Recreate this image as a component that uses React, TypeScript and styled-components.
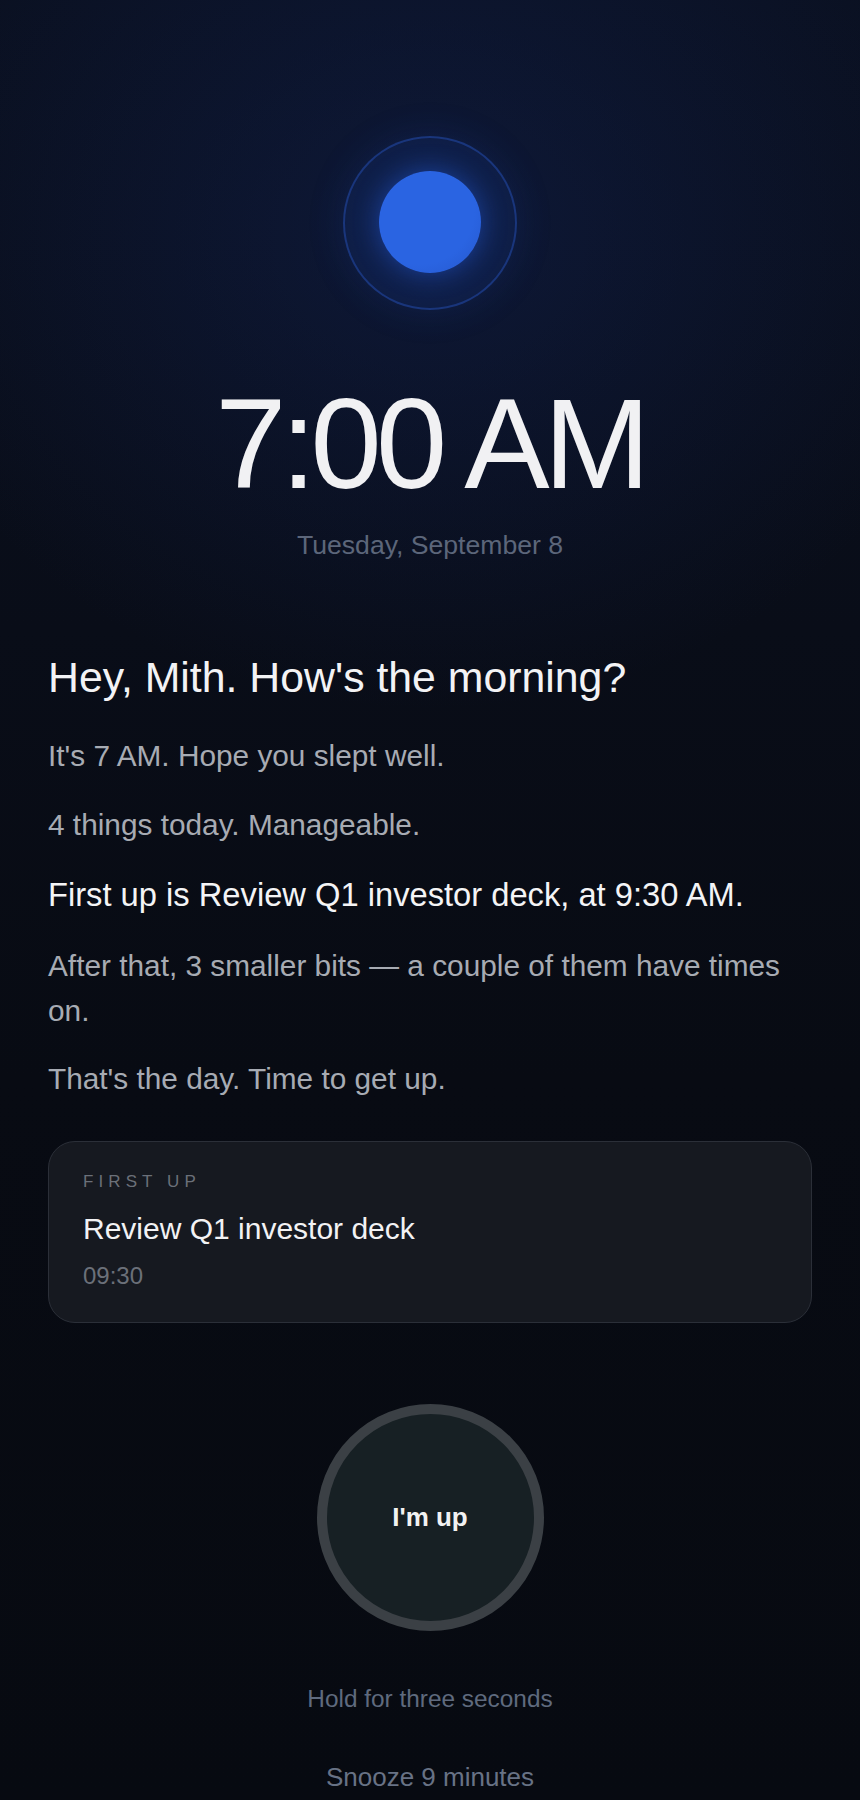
import styled, { createGlobalStyle } from 'styled-components';

const GlobalStyle = createGlobalStyle`
  html, body {
    margin: 0;
    padding: 0;
    background: #080b13;
  }
  body {
    font-family: 'Liberation Sans', Arial, sans-serif;
    -webkit-font-smoothing: antialiased;
  }
  * {
    box-sizing: border-box;
  }
`;

const Page = styled.div`
  min-height: 1800px;
  background:
    radial-gradient(ellipse 560px 480px at 50% 230px, rgba(22, 44, 110, 0.32), rgba(10, 16, 34, 0) 100%),
    linear-gradient(180deg, #0a1020 0%, #090d18 35%, #080b13 60%, #070a11 100%);
`;

const Screen = styled.main`
  display: flex;
  flex-direction: column;
  padding: 136px 48px 0;
`;

const Hero = styled.section`
  display: flex;
  flex-direction: column;
  align-items: center;
`;

const Ring = styled.div`
  width: 174px;
  height: 174px;
  border-radius: 50%;
  border: 2px solid rgba(40, 84, 190, 0.45);
  display: flex;
  align-items: center;
  justify-content: center;
  background: radial-gradient(circle, rgba(32, 80, 200, 0.45) 0%, rgba(22, 52, 130, 0.35) 45%, rgba(14, 32, 80, 0.35) 100%);
  box-shadow: 0 0 36px rgba(30, 70, 180, 0.18);
`;

const Core = styled.div`
  width: 102px;
  height: 102px;
  margin-top: -2px;
  border-radius: 50%;
  background: radial-gradient(circle at 40% 38%, #2a64e2 62%, #2557cc 100%);
  box-shadow: 0 0 26px rgba(37, 99, 235, 0.45);
`;

const Time = styled.h1`
  margin: 70px 0 0;
  font-size: 128px;
  line-height: 128px;
  font-weight: 400;
  letter-spacing: -0.045em;
  color: #f1f1f3;
`;

const DateLine = styled.div`
  margin-top: 22px;
  font-size: 26.6px;
  line-height: 31px;
  color: #5c667a;
`;

const Briefing = styled.section`
  display: flex;
  flex-direction: column;
  margin-top: 91px;
`;

const Greeting = styled.h2`
  margin: 0 0 30px;
  font-size: 42.8px;
  line-height: 51px;
  font-weight: 400;
  color: #f3f3f5;
`;

const Lines = styled.div`
  display: flex;
  flex-direction: column;
  gap: 23.5px;
`;

const Line = styled.p<{ $bright?: boolean }>`
  margin: 0;
  font-size: ${(p) => (p.$bright ? '32.7px' : '29.8px')};
  line-height: ${(p) => (p.$bright ? '49px' : '45px')};
  color: ${(p) => (p.$bright ? '#f4f4f6' : '#a7abb3')};
`;

const Card = styled.div`
  margin-top: 40px;
  padding: 30px 34px 32px;
  border: 1px solid #2b2f38;
  border-radius: 27px;
  background: #161920;
  display: flex;
  flex-direction: column;
`;

const CardLabel = styled.div`
  font-size: 17px;
  line-height: 20px;
  letter-spacing: 0.3em;
  color: #6b7079;
  margin-bottom: 19px;
`;

const CardTitle = styled.div`
  font-size: 30px;
  line-height: 36px;
  color: #f2f2f4;
  margin-bottom: 14px;
`;

const CardTime = styled.div`
  font-size: 24px;
  line-height: 29px;
  color: #6b7079;
`;

const Actions = styled.section`
  display: flex;
  flex-direction: column;
  align-items: center;
  margin-top: 81px;
`;

const HoldButton = styled.button`
  width: 227px;
  height: 227px;
  border-radius: 50%;
  border: 10px solid #3b4045;
  background: #172024;
  color: #f2f2f2;
  font-family: 'Liberation Sans', Arial, sans-serif;
  font-size: 26px;
  font-weight: 700;
  cursor: pointer;
  padding: 0;
`;

const Hint = styled.div`
  margin-top: 53px;
  font-size: 24.4px;
  line-height: 29px;
  color: #5f6a7e;
`;

const SnoozeButton = styled.button`
  margin-top: 49px;
  background: none;
  border: none;
  padding: 0;
  font-family: 'Liberation Sans', Arial, sans-serif;
  font-size: 26px;
  line-height: 31px;
  color: #687285;
  cursor: pointer;
`;

const App = () => {
  return (
    <Page>
      <GlobalStyle />
      <Screen>
        <Hero>
          <Ring>
            <Core />
          </Ring>
          <Time>7:00 AM</Time>
          <DateLine>Tuesday, September 8</DateLine>
        </Hero>

        <Briefing>
          <Greeting>Hey, Mith. How's the morning?</Greeting>
          <Lines>
            <Line>It's 7 AM. Hope you slept well.</Line>
            <Line>4 things today. Manageable.</Line>
            <Line $bright>First up is Review Q1 investor deck, at 9:30 AM.</Line>
            <Line>After that, 3 smaller bits — a couple of them have times on.</Line>
            <Line>That's the day. Time to get up.</Line>
          </Lines>
        </Briefing>

        <Card>
          <CardLabel>FIRST UP</CardLabel>
          <CardTitle>Review Q1 investor deck</CardTitle>
          <CardTime>09:30</CardTime>
        </Card>

        <Actions>
          <HoldButton>I'm up</HoldButton>
          <Hint>Hold for three seconds</Hint>
          <SnoozeButton>Snooze 9 minutes</SnoozeButton>
        </Actions>
      </Screen>
    </Page>
  );
};

export default App;
